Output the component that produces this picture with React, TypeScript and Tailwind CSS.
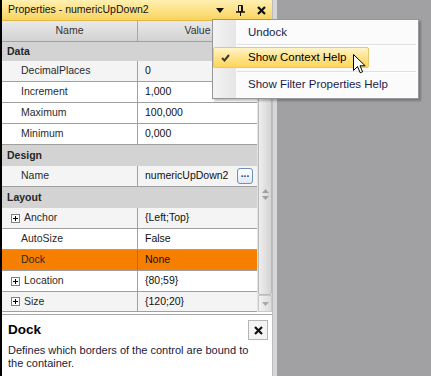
import React from "react";

type Row =
  | { kind: "cat"; label: string; h?: string }
  | { kind: "prop"; name: string; value: string; plus?: boolean; shade?: boolean; selected?: boolean; edit?: boolean; h?: string };

const rows: Row[] = [
  { kind: "cat", label: "Data", h: "h-[19px]" },
  { kind: "prop", name: "DecimalPlaces", value: "0", shade: true },
  { kind: "prop", name: "Increment", value: "1,000" },
  { kind: "prop", name: "Maximum", value: "100,000" },
  { kind: "prop", name: "Minimum", value: "0,000" },
  { kind: "cat", label: "Design" },
  { kind: "prop", name: "Name", value: "numericUpDown2", shade: true, edit: true },
  { kind: "cat", label: "Layout" },
  { kind: "prop", name: "Anchor", value: "{Left;Top}", plus: true, shade: true },
  { kind: "prop", name: "AutoSize", value: "False" },
  { kind: "prop", name: "Dock", value: "None", selected: true },
  { kind: "prop", name: "Location", value: "{80;59}", plus: true },
  { kind: "prop", name: "Size", value: "{120;20}", plus: true, shade: true, h: "h-[20px]" },
];

const PlusBox = () => (
  <span className="mr-[4px] flex h-[9px] w-[9px] items-center justify-center border border-[#7f7f7f] bg-white">
    <svg width="5" height="5" viewBox="0 0 5 5">
      <path d="M0 2.5H5M2.5 0V5" stroke="#000" strokeWidth="1" />
    </svg>
  </span>
);

const GridRow: React.FC<{ row: Row }> = ({ row }) => {
  if (row.kind === "cat") {
    return (
      <div className={`flex ${row.h ?? "h-[21px]"} items-center bg-[#d3d3d3] pl-[5px] font-bold text-[#262626]`}>
        {row.label}
      </div>
    );
  }
  const bg = row.selected ? "bg-[#f67f00]" : row.shade ? "bg-[#f4f4f4]" : "bg-white";
  return (
    <div className={`flex ${row.h ?? "h-[21px]"} border-b border-[#a0a0a0] ${bg}`}>
      <div
        className={`flex w-[136px] items-center border-r ${
          row.selected ? "border-[#c06a10]" : "border-[#a0a0a0]"
        } ${row.plus ? "pl-[9px]" : "pl-[19px]"} text-[#2a2a2a]`}
      >
        {row.plus && <PlusBox />}
        {row.name}
      </div>
      <div className="flex flex-1 items-center justify-between pl-[7px] pr-[4px] text-[#111]">
        <span>{row.value}</span>
        {row.edit && (
          <span className="flex h-[16px] w-[16px] items-center justify-center rounded-[3px] border border-[#6f8fbf] bg-gradient-to-b from-[#ffffff] to-[#dfe8f5] pb-[4px] text-[10px] font-bold leading-none text-[#1f3f7f]">
            ...
          </span>
        )}
      </div>
    </div>
  );
};

const Scrollbar = () => (
  <div className="flex w-[15px] flex-col border-l border-[#e2e2e2] bg-[#ececec]">
    <div className="flex h-[17px] items-center justify-center border border-[#c9c9c9] bg-gradient-to-r from-[#f2f2f2] to-[#dcdcdc]">
      <svg width="7" height="4" viewBox="0 0 7 4">
        <path d="M0 4L3.5 0L7 4Z" fill="#a8a8a8" />
      </svg>
    </div>
    <div className="flex flex-1 items-center justify-center rounded-[2px] border border-[#b9b9b9] bg-gradient-to-r from-[#eeeeee] to-[#d4d4d4] pt-[34px]">
      <svg width="7" height="11" viewBox="0 0 7 11">
        <path d="M0 4L3.5 0L7 4Z M0 7L3.5 11L7 7Z" fill="#a0a0a0" />
      </svg>
    </div>
    <div className="flex h-[17px] items-center justify-center border border-[#c9c9c9] bg-gradient-to-r from-[#f2f2f2] to-[#dcdcdc]">
      <svg width="7" height="4" viewBox="0 0 7 4">
        <path d="M0 0L3.5 4L7 0Z" fill="#a8a8a8" />
      </svg>
    </div>
  </div>
);

const ContextMenu = () => (
  <div className="absolute left-[212px] top-[19px] flex w-[207px] flex-col border border-[#979797] bg-[#fbfbfb] py-[1px] text-[11.5px] text-[#1b1b4b] shadow-[2px_2px_2px_rgba(0,0,0,0.25)] [font-family:'Liberation_Sans',Arial,sans-serif]">
    <div className="absolute bottom-0 left-0 top-0 w-[23px] bg-gradient-to-r from-[#f3f3f3] to-[#e6e6e6]" />
    <div className="relative flex h-[23px] items-center pl-[35px]">Undock</div>
    <div className="relative ml-[24px] mr-[2px] h-[2px] border-b border-t border-b-white border-t-[#e0e0e0]" />
    <div className="relative mt-[1px] flex h-[21px] w-[156px] items-center rounded-[2px] border border-[#e9c86b] bg-gradient-to-b from-[#fff4c8] via-[#ffe38a] to-[#ffd45a] pl-[34px] text-[#000]">
      <svg className="absolute left-[7px] top-[6px]" width="9" height="8" viewBox="0 0 9 8">
        <path d="M1 4L3.5 6.5L8 1" fill="none" stroke="#3a3a3a" strokeWidth="2" />
      </svg>
      Show Context Help
    </div>
    <div className="relative ml-[24px] mr-[2px] mt-[3px] h-[2px] border-b border-t border-b-white border-t-[#e0e0e0]" />
    <div className="relative flex h-[24px] items-center pl-[35px]">Show Filter Properties Help</div>
    <svg className="absolute left-[140px] top-[34px]" width="13" height="20" viewBox="0 0 13 20">
      <path d="M0.5 0.5V16.5L4.5 12.5L7.2 18.8L9.6 17.8L7 11.8H12.2Z" fill="#fff" stroke="#000" strokeWidth="1" strokeLinejoin="round" />
    </svg>
  </div>
);

export default function App() {
  return (
    <div className="relative flex h-[376px] w-[431px] overflow-hidden bg-[#a1a1a4] text-[10.5px] [font-family:'Liberation_Sans',Arial,sans-serif]">
      <div className="w-[2px] bg-black" />
      <div className="flex w-[271px] flex-col border-r border-[#bdbdbd] bg-white">
        <div className="flex h-[21px] items-center justify-between border-b border-[#e0b84a] bg-gradient-to-b from-[#fff0b0] to-[#f9d35a] pl-[6px] pr-[6px] text-[#111]">
          <span>Properties - numericUpDown2</span>
          <div className="flex items-center gap-[12px]">
            <svg width="8" height="5" viewBox="0 0 8 5">
              <path d="M0 0H8L4 5Z" fill="#111" />
            </svg>
            <svg width="9" height="11" viewBox="0 0 9 11">
              <path d="M2.5 0.5H6.5V6.5H2.5Z" fill="none" stroke="#111" />
              <path d="M5.5 1V6" stroke="#111" />
              <path d="M0 7H9" stroke="#111" strokeWidth="1.5" />
              <path d="M4.5 7V11" stroke="#111" />
            </svg>
            <svg width="9" height="9" viewBox="0 0 9 9">
              <path d="M1 1L8 8M8 1L1 8" stroke="#111" strokeWidth="2.2" />
            </svg>
          </div>
        </div>
        <div className="flex">
          <div className="flex flex-1 flex-col">
            <div className="flex h-[21px] border-b border-[#a0a0a0] bg-gradient-to-b from-[#e9e9e9] to-[#d2d2d2] text-[#333]">
              <div className="flex w-[136px] items-center justify-center border-r border-[#a8a8a8]">Name</div>
              <div className="flex flex-1 items-center justify-center">Value</div>
            </div>
            {rows.map((row, i) => (
              <GridRow key={i} row={row} />
            ))}
          </div>
          <div className="mt-[21px] flex">
            <Scrollbar />
          </div>
        </div>
        <div className="mt-[2px] flex flex-1 flex-col border-t border-[#a8a8a8] px-[6px] pt-[5px]">
          <div className="flex items-start justify-between">
            <span className="text-[13.5px] font-bold text-black">Dock</span>
            <span className="mr-[-2px] flex h-[20px] w-[20px] items-center justify-center border border-[#b4b4b4] bg-[#f4f4f4]">
              <svg width="9" height="9" viewBox="0 0 9 9">
                <path d="M1 1L8 8M8 1L1 8" stroke="#111" strokeWidth="2.2" />
              </svg>
            </span>
          </div>
          <p className="mt-[4px] text-[11px] leading-[13px] text-[#1a1a3a]">
            Defines which borders of the control are bound to the container.
          </p>
        </div>
      </div>
      <div className="w-[4px] bg-[#d6d6d6]" />
      <div className="flex-1" />
      <ContextMenu />
    </div>
  );
}
